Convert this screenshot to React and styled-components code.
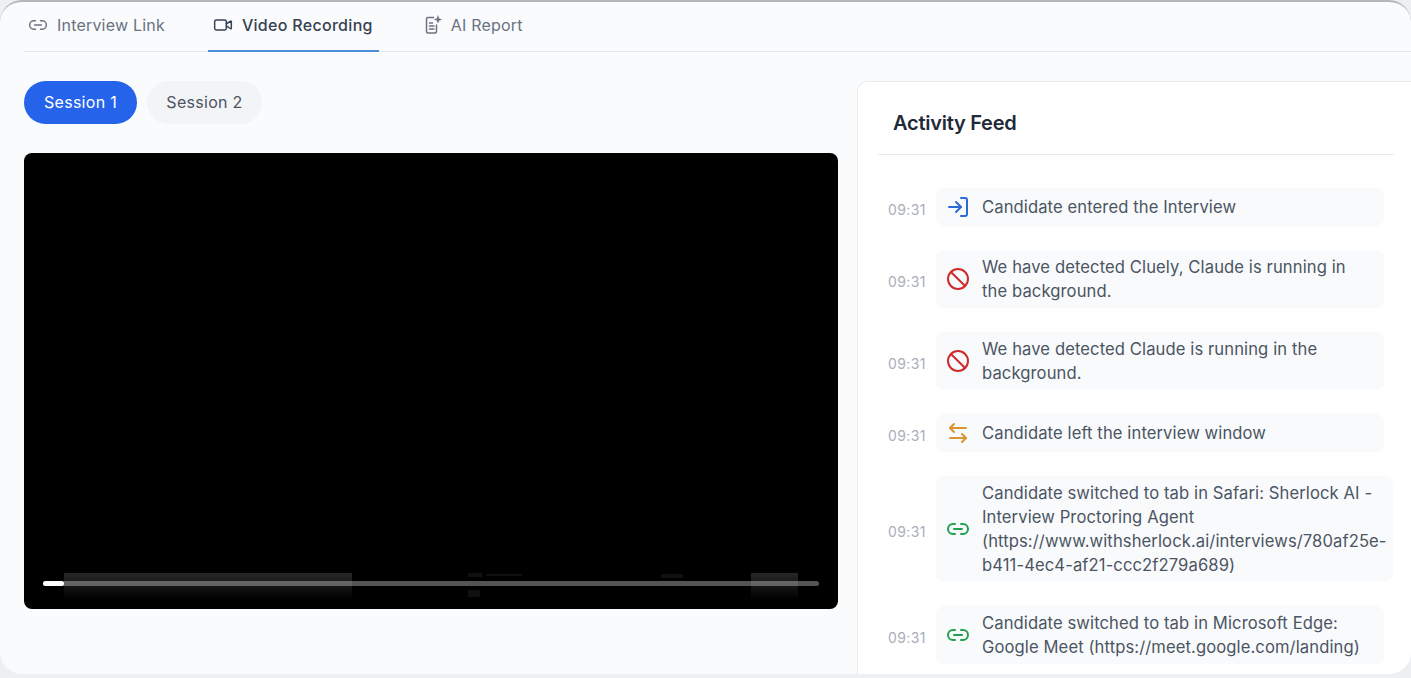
import React from "react";
import styled, { createGlobalStyle } from "styled-components";
import { Ban, ArrowLeftRight, Link2, LogIn, Video } from "lucide-react";

const GlobalStyle = createGlobalStyle`
  html, body {
    margin: 0;
    padding: 0;
    background: #ffffff;
    overflow: hidden;
  }
  * { box-sizing: border-box; }
  body {
    font-family: Inter, "Liberation Sans", sans-serif;
    -webkit-font-smoothing: antialiased;
  }
`;

const Stage = styled.div`
  width: 1411px;
  height: 678px;
  background: #eeeff0;
  overflow: hidden;
`;

const Panel = styled.div`
  height: 674px;
  background: #f9fbfd;
  border-radius: 22px;
  border-top: 2px solid #b4b6b8;
  overflow: hidden;
`;

const TabBar = styled.nav`
  display: flex;
  margin: 0 0 0 24px;
  height: 50px;
  border-bottom: 1px solid #e5e7eb;
`;

const Tab = styled.div`
  display: flex;
  align-items: center;
  gap: ${(p) => p.$gap}px;
  height: 50px;
  margin-left: ${(p) => p.$offset}px;
  padding: 0 ${(p) => p.$padRight}px 2px ${(p) => p.$padLeft}px;
  font-size: 16px;
  font-weight: ${(p) => (p.$active ? 500 : 400)};
  letter-spacing: ${(p) => (p.$active ? 0.3 : 0.2)}px;
  color: ${(p) => (p.$active ? "#374151" : "#6b7280")};
  border-bottom: 2px solid ${(p) => (p.$active ? "#4a8ddd" : "transparent")};
  svg {
    flex: none;
    color: ${(p) => (p.$active ? "#374151" : "#6b7280")};
  }
`;

const Body = styled.div`
  display: flex;
  gap: 19px;
  padding: 29px 0 0 24px;
`;

const LeftColumn = styled.section`
  flex: 0 0 814px;
`;

const Sessions = styled.div`
  display: flex;
  gap: 10px;
  margin-bottom: 29px;
`;

const SessionButton = styled.button`
  height: 43px;
  width: ${(p) => p.$width}px;
  padding: 0 0 2px;
  border: 0;
  border-radius: 22px;
  font: 400 16px Inter, "Liberation Sans", sans-serif;
  letter-spacing: 0.3px;
  color: ${(p) => (p.$active ? "#ffffff" : "#4b5563")};
  background: ${(p) => (p.$active ? "#2563eb" : "#f3f4f6")};
`;

const Player = styled.div`
  position: relative;
  height: 456px;
  background: #000000;
  border-radius: 8px;
  overflow: hidden;
`;

const GhostBand = styled.div`
  position: absolute;
  top: 420px;
  left: ${(p) => p.$left}px;
  width: ${(p) => p.$width}px;
  height: 27px;
  background: linear-gradient(#272727 0%, #161616 45%, #000000 100%);
`;

const GhostMark = styled.div`
  position: absolute;
  top: ${(p) => p.$top}px;
  left: ${(p) => p.$left}px;
  width: ${(p) => p.$width}px;
  height: ${(p) => p.$height}px;
  background: #101010;
`;

const Progress = styled.div`
  position: absolute;
  left: 19px;
  right: 19px;
  top: 428px;
  height: 5px;
  border-radius: 3px;
  background: rgba(255, 255, 255, 0.33);
`;

const ProgressFill = styled.div`
  height: 100%;
  border-radius: 3px;
  background: #ffffff;
`;

const FeedCard = styled.aside`
  flex: 0 0 600px;
  height: 640px;
  padding: 0 0 0 20px;
  background: #ffffff;
  border: 1px solid #e8eaee;
  border-radius: 10px;
`;

const FeedTitle = styled.h2`
  width: 516px;
  height: 73px;
  margin: 0 0 33px;
  padding: 27px 0 0 15px;
  font-size: 20px;
  line-height: 28px;
  font-weight: 600;
  letter-spacing: -0.25px;
  color: #1f2937;
  border-bottom: 1px solid #e8eaee;
`;

const FeedList = styled.ul`
  display: flex;
  flex-direction: column;
  gap: 24px;
  margin: 0;
  padding: 0 0 0 10px;
  list-style: none;
`;

const FeedRow = styled.li`
  display: flex;
  align-items: center;
  gap: 10px;
`;

const Time = styled.span`
  flex: none;
  width: 38px;
  padding-top: 5px;
  font-size: 14px;
  letter-spacing: 0.4px;
  color: #a9aeb7;
  white-space: nowrap;
`;

const Bubble = styled.div`
  display: flex;
  align-items: center;
  gap: 12px;
  min-width: 448px;
  min-height: 38px;
  padding: 5px 6px 5px 10px;
  background: #f9fafb;
  border-radius: 8px;
  svg {
    flex: none;
    color: ${(p) => p.$tone};
  }
`;

const Message = styled.p`
  width: 392px;
  min-width: min-content;
  margin: 0;
  font-size: 16.6px;
  line-height: 24px;
  letter-spacing: 0.1px;
  color: #4b5563;
`;

const ReportIcon = () => (
  <svg width="20" height="20" viewBox="0 0 20 20" fill="none" stroke="currentColor" strokeWidth="1.5" strokeLinecap="round" strokeLinejoin="round">
    <path d="M10.5 2.5H5A1.500 1.500 0 0 0 3.500 4v12.500A1.500 1.500 0 0 0 5 18h7a1.500 1.500 0 0 0 1.500-1.500V10" />
    <path d="M6.500 8h3M6.500 11h4.500M6.500 14h4.500" />
    <path d="M15 1l.9 2.600 2.600.9-2.600.9L15 8l-.9-2.600-2.600-.9 2.600-.9z" fill="currentColor" strokeWidth="0.5" />
  </svg>
);

const feed = [
  { id: 1, Icon: LogIn, tone: "#2a6bd9", text: "Candidate entered the Interview" },
  { id: 2, Icon: Ban, tone: "#d02b2b", text: "We have detected Cluely, Claude is running in the background." },
  { id: 3, Icon: Ban, tone: "#d02b2b", text: "We have detected Claude is running in the background." },
  { id: 4, Icon: ArrowLeftRight, tone: "#d9962f", text: "Candidate left the interview window" },
  {
    id: 5,
    Icon: Link2,
    tone: "#22a050",
    text: "Candidate switched to tab in Safari: Sherlock AI - Interview Proctoring Agent (https://www.withsherlock.ai/interviews/780af25e-b411-4ec4-af21-ccc2f279a689)",
  },
  {
    id: 6,
    Icon: Link2,
    tone: "#22a050",
    text: "Candidate switched to tab in Microsoft Edge: Google Meet (https://meet.google.com/landing)",
  },
];

const ghostBands = [
  { left: 40, width: 288 },
  { left: 727, width: 47 },
];

const ghostMarks = [
  { left: 444, top: 420, width: 14, height: 4 },
  { left: 462, top: 421, width: 36, height: 2 },
  { left: 444, top: 437, width: 12, height: 7 },
  { left: 637, top: 421, width: 22, height: 4 },
];

export default function App() {
  return (
    <Stage>
      <GlobalStyle />
      <Panel>
        <TabBar>
          <Tab $offset={0} $padLeft={4} $padRight={4} $gap={9}>
            <Link2 size={20} strokeWidth={1.75} />
            Interview Link
          </Tab>
          <Tab $offset={39} $padLeft={5} $padRight={6} $gap={9} $active>
            <Video size={20} strokeWidth={1.75} />
            Video Recording
          </Tab>
          <Tab $offset={39} $padLeft={5} $padRight={5} $gap={8}>
            <ReportIcon />
            AI Report
          </Tab>
        </TabBar>
        <Body>
          <LeftColumn>
            <Sessions>
              <SessionButton $active $width={113}>Session 1</SessionButton>
              <SessionButton $width={115}>Session 2</SessionButton>
            </Sessions>
            <Player>
              {ghostBands.map((band) => (
                <GhostBand key={band.left} $left={band.left} $width={band.width} />
              ))}
              {ghostMarks.map((mark) => (
                <GhostMark key={`${mark.left}-${mark.top}`} $left={mark.left} $top={mark.top} $width={mark.width} $height={mark.height} />
              ))}
              <Progress>
                <ProgressFill style={{ width: "2.7%" }} />
              </Progress>
            </Player>
          </LeftColumn>
          <FeedCard>
            <FeedTitle>Activity Feed</FeedTitle>
            <FeedList>
              {feed.map(({ id, Icon, tone, text }) => (
                <FeedRow key={id}>
                  <Time>09:31</Time>
                  <Bubble $tone={tone}>
                    <Icon size={24} strokeWidth={2} />
                    <Message>{text}</Message>
                  </Bubble>
                </FeedRow>
              ))}
            </FeedList>
          </FeedCard>
        </Body>
      </Panel>
    </Stage>
  );
}
